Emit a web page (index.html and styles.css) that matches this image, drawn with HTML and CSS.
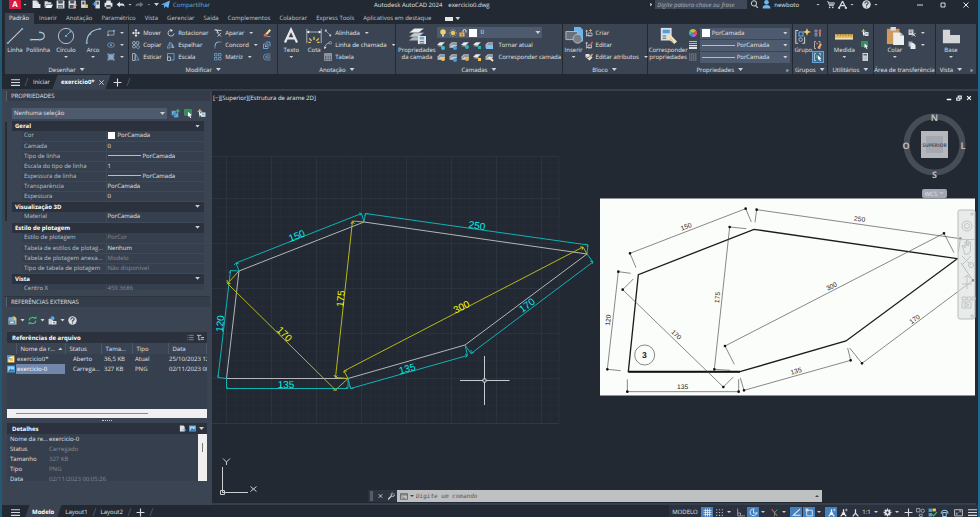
FILE: index.html
```html
<!DOCTYPE html>
<html lang="pt-BR">
<head>
<meta charset="utf-8">
<title>Autodesk AutoCAD 2024 - exercicio0.dwg</title>
<link rel="stylesheet" href="styles.css">
</head>
<body>
<svg class="sprite" aria-hidden="true">
  <symbol id="new" viewBox="0 0 16 16"><path d="M1 1h8l3 3v3H15v7H1z" fill="#e4e6e9"/><path d="M9 1v3h3" fill="none" stroke="#59616d"/></symbol>
  <symbol id="open" viewBox="0 0 16 16"><path d="M1 2h5l2 2h5v3H5l-3 6H1z" fill="#d4d7db"/><path d="M5 8h11l-3 6H2z" fill="#f2f3f4"/></symbol>
  <symbol id="save" viewBox="0 0 16 16"><path d="M1 1h13l1 1v13H1z" fill="#d9dce0"/><path d="M4 1h8v5H4zM4 9h8v5H4z" fill="#4a5260"/><path d="M5 11h6M5 13h6" stroke="#e4e6e9"/></symbol>
  <symbol id="saveas" viewBox="0 0 16 16"><path d="M1 1h13v14H1z" fill="#d9dce0"/><path d="M4 1h7v5H4zM3 9h7v5H3z" fill="#4a5260"/><path d="M8 14l6-7 2 2-6 6z" fill="#e8875a"/></symbol>
  <symbol id="webopen" viewBox="0 0 16 16"><path d="M2 1h8v13H2z" fill="#d9dce0"/><path d="M4 3h4v5H4z" fill="#4a5260"/><path d="M9 8h5v6H7z" fill="#efc15c"/></symbol>
  <symbol id="websave" viewBox="0 0 16 16"><path d="M6 1h8v14H6z" fill="#d9dce0"/><path d="M8 3h4v5H8z" fill="#4a5260"/><path d="M1 7h6M4 4l3 3-3 3" stroke="#5eb1e8" stroke-width="2" fill="none"/></symbol>
  <symbol id="print" viewBox="0 0 16 16"><path d="M4 1h8v4H4zM1 5h14v7h-3v3H4v-3H1z" fill="#e4e6e9"/><path d="M4 9h8v4H4z" fill="#454d5a"/></symbol>
  <symbol id="undo" viewBox="0 0 16 16"><path d="M1 8l6-5v3h4q4 0 4 6-2-3-8-2v3z" fill="#dfe2e5"/></symbol>
  <symbol id="redo" viewBox="0 0 16 16"><path d="M15 8L9 3v3H5q-4 0-4 6 2-3 8-2v3z" fill="#69717d"/></symbol>
  <symbol id="plane" viewBox="0 0 16 16"><path d="M0 8L16 1l-3 13-5-3-2 4-1-6 7-5-8 5z" fill="#67b5ec"/></symbol>
  <symbol id="lens" viewBox="0 0 16 16"><circle cx="7" cy="6" r="4.500" fill="none" stroke="#c5c9ce" stroke-width="1.800"/><path d="M10 10l4 4" stroke="#c5c9ce" stroke-width="2.200"/></symbol>
  <symbol id="user" viewBox="0 0 16 16"><circle cx="8" cy="4" r="4" fill="#6bb9ef"/><path d="M1 15q0-6 7-6t7 6z" fill="#6bb9ef"/></symbol>
  <symbol id="cart" viewBox="0 0 16 16"><path d="M2 3h2l2 7h7l2-5H5" fill="none" stroke="#cfd3d8" stroke-width="1.600"/><path d="M5 6h9l-1 3H6z" fill="#aeb3ba"/><circle cx="6.500" cy="13" r="1.500" fill="#cfd3d8"/><circle cx="12" cy="13" r="1.500" fill="#cfd3d8"/></symbol>
  <symbol id="delta" viewBox="0 0 16 16"><path d="M8 2L2 14M8 2l6 12M4 10h8" fill="none" stroke="#dadde1" stroke-width="2"/><circle cx="2" cy="14" r="2" fill="#dadde1"/><circle cx="14" cy="14" r="2" fill="#dadde1"/></symbol>
  <symbol id="help" viewBox="0 0 16 16"><circle cx="8" cy="8" r="7.5" fill="#d8dadd"/><path d="M5 6q0-3 3-3t3 2.500q0 1.500-3 3.500v1M8 11.500v2" fill="none" stroke="#3b4453" stroke-width="2"/></symbol>

  <symbol id="line" viewBox="0 0 20 20"><path d="M2 18L18 2" stroke="#c5c9cf" stroke-width="1.200"/><path d="M1 17h2v2H1zM17 1h2v2h-2z" fill="#62b4ee"/></symbol>
  <symbol id="pline" viewBox="0 0 20 20"><path d="M2 14h10q5 0 5-4t-5-4" fill="none" stroke="#c5c9cf" stroke-width="1.200"/><path d="M1 13h2v2H1zM11 13h2v2h-2zM11 5h2v2h-2z" fill="#62b4ee"/></symbol>
  <symbol id="circle" viewBox="0 0 20 20"><circle cx="10" cy="10" r="8.500" fill="none" stroke="#c5c9cf"/><path d="M10 10l5-5" stroke="#62b4ee"/><path d="M9 9h2v2H9zM14 4h2v2h-2z" fill="#62b4ee"/></symbol>
  <symbol id="arc" viewBox="0 0 20 20"><path d="M3 18Q3 4 18 2" fill="none" stroke="#c5c9cf" stroke-width="1.200"/><path d="M2 17h2v2H2zM6 7h2v2H6zM17 1h2v2h-2z" fill="#62b4ee"/></symbol>
  <symbol id="rect" viewBox="0 0 16 16"><path d="M2 4h12v8H2z" fill="none" stroke="#aeb3bb" stroke-width="1.500"/><path d="M0 11h4v3H0zM12 2h4v3h-4z" fill="#62b4ee"/></symbol>
  <symbol id="ellipse" viewBox="0 0 16 16"><ellipse cx="8" cy="8" rx="7" ry="4.500" fill="none" stroke="#7f9fbd" stroke-width="1.500"/><circle cx="8" cy="8" r="1.800" fill="#62b4ee"/></symbol>
  <symbol id="hatch" viewBox="0 0 16 16"><path d="M3 3h10v10H3z" fill="#7fa9d0"/><path d="M2.500 0v16M13.500 0v16M0 2.500h16M0 13.500h16" stroke="#a9b5c3"/></symbol>
  <symbol id="move" viewBox="0 0 16 16"><path d="M8 1v14M1 8h14" stroke="#e0e3e6" stroke-width="2"/><path d="M5 4l3-4 3 4zM5 12l3 4 3-4zM4 5L0 8l4 3zM12 5l4 3-4 3z" fill="#e0e3e6"/></symbol>
  <symbol id="copy" viewBox="0 0 16 16"><g fill="none" stroke="#bfc4cb" stroke-width="1.500"><circle cx="4" cy="4" r="3"/><circle cx="11" cy="4" r="3"/><circle cx="4" cy="11" r="3"/></g><circle cx="12" cy="12" r="3" fill="none" stroke="#62b4ee" stroke-width="1.500"/></symbol>
  <symbol id="stretch" viewBox="0 0 16 16"><path d="M1 1h5v14H1z" fill="none" stroke="#bfc4cb" stroke-width="1.500"/><path d="M7 2l7 12H7z" fill="none" stroke="#62b4ee" stroke-width="1.500"/></symbol>
  <symbol id="rotate" viewBox="0 0 16 16"><path d="M10 2.500A6 6 0 1 0 14 9" fill="none" stroke="#c9cdd3" stroke-width="1.800"/><path d="M7 0l5 3-5 3z" fill="#e0e3e6"/></symbol>
  <symbol id="mirror" viewBox="0 0 16 16"><path d="M6 2v12H0z" fill="none" stroke="#62b4ee" stroke-width="1.500"/><path d="M9 2v12h6z" fill="#8fa3b8"/></symbol>
  <symbol id="scale" viewBox="0 0 16 16"><path d="M1 1h13v13H1z" fill="none" stroke="#62b4ee" stroke-width="1.500"/><path d="M1 8h6v7H1z" fill="#3b4453" stroke="#c9cdd3" stroke-width="1.500"/></symbol>
  <symbol id="trim" viewBox="0 0 16 16"><path d="M1 2l14 1M3 0l6 8M8 2L6 8" stroke="#d5d8dc" stroke-width="1.800"/><path d="M7 8l7 7M14 8l-7 7" stroke="#c9cdd3" stroke-width="1.800"/></symbol>
  <symbol id="fillet" viewBox="0 0 16 16"><path d="M2 15V9q0-7 7-7h6" fill="none" stroke="#8b98a8" stroke-width="1.500"/><path d="M2 10q0-8 7-8" fill="none" stroke="#62b4ee" stroke-width="2"/></symbol>
  <symbol id="array" viewBox="0 0 16 16"><path d="M1 1h5v5H1zM9 1h5v5H9zM1 9h5v5H1zM9 9h5v5H9z" fill="none" stroke="#6ea9d8" stroke-width="1.500"/></symbol>
  <symbol id="erase" viewBox="0 0 16 16"><path d="M5 9L13 0l3 3-8 9z" fill="#f0d99a"/><path d="M1 12l4-4 4 4-3 3H2z" fill="#e9655c"/><path d="M7 15h8" stroke="#d8dadd"/></symbol>
  <symbol id="explode" viewBox="0 0 16 16"><path d="M1 6h9v9H1zM5 2h9v9" fill="none" stroke="#6ea9d8" stroke-width="1.800"/><path d="M4 9h3v3H4z" fill="#c9cdd3"/></symbol>
  <symbol id="offset" viewBox="0 0 16 16"><path d="M15 2H7q-6 0-6 6t6 6h8" fill="none" stroke="#5b93c4" stroke-width="1.800"/><path d="M15 6H8q-3 0-3 2t3 2h7" fill="none" stroke="#9aa3af" stroke-width="1.500"/></symbol>

  <symbol id="text" viewBox="0 0 20 20"><path d="M2.500 18L10 2l7.500 16M5 13h10" fill="none" stroke="#e6e8ea" stroke-width="2.800"/></symbol>
  <symbol id="dim" viewBox="0 0 20 20"><path d="M1 1v18M19 1v18M1 5h18" stroke="#c9cdd3" fill="none"/><path d="M1 5l3-2v4zM19 5l-3-2v4z" fill="#fff"/><path d="M10 15v-4M7 16l-3-3M13 16l3-3M6 18H3M14 18h3" stroke="#efc65f" stroke-width="1.600"/></symbol>
  <symbol id="aligned" viewBox="0 0 16 16"><path d="M1 4l4-3M11 15l4-3M3 3l10 10" stroke="#62b4ee" stroke-width="1.500"/><path d="M2 1l4 2-3 3zM14 15l-4-2 3-3z" fill="#dfe2e5"/></symbol>
  <symbol id="leader" viewBox="0 0 16 16"><path d="M1 15Q3 5 10 4" fill="none" stroke="#c9cdd3" stroke-width="1.500"/><circle cx="12.500" cy="3.500" r="2.500" fill="none" stroke="#c9cdd3" stroke-width="1.200"/><path d="M0 11l1 5 4-3z" fill="#dfe2e5"/></symbol>
  <symbol id="table" viewBox="0 0 16 16"><path d="M1 1h14v14H1zM1 5h14M1 8h14M1 11.500h14M6 5v10M10.500 5v10" fill="none" stroke="#b9bfc7" stroke-width="1.200"/><path d="M1 1h14v3H1z" fill="#8b94a1"/></symbol>

  <symbol id="layers" viewBox="0 0 20 20"><path d="M1 15l6-5h11l-6 5z" fill="#aeb2b8"/><path d="M1 11l6-5h11l-6 5z" fill="#c9ccd0" stroke="#454d5a" stroke-width=".5"/><path d="M1 6.500l6-5h11l-6 5z" fill="#eceded" stroke="#454d5a" stroke-width=".5"/><path d="M11 10h9v9h-9z" fill="#e3e6e9"/><path d="M13 11h5v3h-5z" fill="#60aee6"/><path d="M13 16h5M13 18h5" stroke="#59616d"/></symbol>
  <symbol id="bulb" viewBox="0 0 16 16"><circle cx="8" cy="6" r="5.500" fill="#f7cf68"/><path d="M6 11h4v4H6z" fill="#d9d2ba"/></symbol>
  <symbol id="sun" viewBox="0 0 16 16"><circle cx="8" cy="8" r="4" fill="#f7cf68"/><path d="M8 0v16M0 8h16M2.500 2.500l11 11M13.500 2.500l-11 11" stroke="#f0bf55" stroke-width="1.200"/></symbol>
  <symbol id="lock" viewBox="0 0 16 16"><path d="M1 7h10v8H1z" fill="#f2b24f"/><path d="M8 7V4q0-3 3-3t3 3v3" fill="none" stroke="#e4e6e9" stroke-width="2"/><path d="M5 9h2v4H5z" fill="#564427"/></symbol>
  <symbol id="lyr" viewBox="0 0 16 16"><path d="M0 7l5-5h9l-5 5z" fill="#e6e8ea"/><path d="M0 9l5-2h5l-2 3z" fill="#abb1b8"/></symbol>
  <symbol id="lyr2" viewBox="0 0 16 16"><path d="M1 6l4-4h9v6l-4 4H1z" fill="#c9cdd2"/><path d="M2 10l4-4h8M2 8l4-4h8" stroke="#545d69" fill="none"/></symbol>
  <symbol id="match" viewBox="0 0 20 20"><path d="M2 1h12v14H2z" fill="#dcdfe2"/><path d="M4 3h8v4H4z" fill="#4f9fdb"/><path d="M4 10h4M4 12.500h4" stroke="#515a66"/><path d="M9 12l4-3 7 7-3 3z" fill="#efe3c0"/><path d="M12 12l4 5" stroke="#e8a84a"/></symbol>

  <symbol id="insert" viewBox="0 0 20 20"><path d="M10 0h7l3 3v13H10z" fill="#69b7ee"/><path d="M1 5h13v9H1z" fill="#69717c" stroke="#b9bec5"/><circle cx="14" cy="13" r="5" fill="#78808a" stroke="#b9bec5"/></symbol>
  <symbol id="bcreate" viewBox="0 0 16 16"><path d="M1 4h5M3 2v13M3 13h9M6 8h8v6H6z" fill="none" stroke="#c9cdd3" stroke-width="1.500"/><path d="M11 0v6M8 3h6" stroke="#eda553" stroke-width="1.800"/></symbol>
  <symbol id="bedit" viewBox="0 0 16 16"><path d="M1 4h5M3 2v13M3 13h9M6 8h7v6H6z" fill="none" stroke="#c9cdd3" stroke-width="1.500"/><path d="M8 10l6-9 2 2-6 8z" fill="#e9655c"/></symbol>
  <symbol id="battr" viewBox="0 0 16 16"><path d="M1 2h7l7 7-6 6-8-7z" fill="#dfe2e5"/><path d="M3 7l3 3 6-7" stroke="#454d5a" stroke-width="1.500" fill="none"/><path d="M8 9l6-8 2 2-6 7z" fill="#efb158"/></symbol>

  <symbol id="wheel" viewBox="0 0 16 16"><path d="M8 8V0a8 8 0 0 1 7 4z" fill="#f59f34"/><path d="M8 8l7-4a8 8 0 0 1 0 8z" fill="#e84d52"/><path d="M8 8l7 4a8 8 0 0 1-7 4z" fill="#c95fc3"/><path d="M8 8v8a8 8 0 0 1-7-4z" fill="#4d79e3"/><path d="M8 8l-7 4a8 8 0 0 1 0-8z" fill="#3bbf9a"/><path d="M8 8L1 4a8 8 0 0 1 7-4z" fill="#a5cf4b"/></symbol>
  <symbol id="lweight" viewBox="0 0 16 16"><path d="M0 1h16M0 5h16" stroke="#dfe2e5" stroke-width="1.500"/><path d="M0 8h16v2.500H0zM0 12h16v4H0z" fill="#dfe2e5"/></symbol>
  <symbol id="ltype" viewBox="0 0 16 16"><path d="M0 2h16M0 6h16M0 10h16M0 14h16" stroke="#8f98a5" stroke-width="1.800" stroke-dasharray="3 1"/></symbol>

  <symbol id="group" viewBox="0 0 20 20"><path d="M4 3H1v16h3M9 19h3V11" fill="none" stroke="#c9cdd3" stroke-width="1.300"/><path d="M5 5h5v5H5z" fill="none" stroke="#62b4ee" stroke-width="1.300"/><circle cx="7" cy="14.500" r="2.200" fill="none" stroke="#b9bec5" stroke-width="1.200"/><path d="M15 0l1.200 3.500L20 5l-3.800 1.300L15 10l-1.300-3.700L10 5l3.700-1.500z" fill="#f7cc60"/></symbol>
  <symbol id="ungroup" viewBox="0 0 16 16"><path d="M2 2h4v4H2zM2 9h4v5H2z" fill="none" stroke="#8fb6d8" stroke-width="1.500"/><path d="M12 1v14" stroke="#c9cdd3" stroke-width="2"/><path d="M9 3l5 5M14 3L9 8" stroke="#e35a54" stroke-width="1.800"/></symbol>
  <symbol id="gedit" viewBox="0 0 16 16"><path d="M4 1H1v14h3M9 1h3v14H9" fill="none" stroke="#c9cdd3" stroke-width="1.500"/><circle cx="6" cy="5" r="2" fill="#e35a54"/><path d="M7 13l6-8 3 2-6 8z" fill="#efb158"/></symbol>
  <symbol id="gsel" viewBox="0 0 16 16"><path d="M4 1H1v14h3M10 1h3v4" fill="none" stroke="#d9dce0" stroke-width="1.500"/><path d="M4 4h5v6H4z" fill="#3fae6c"/><path d="M8 5l7 6-3 .500 2 4-2 .500-2-4-2 2z" fill="#fff"/></symbol>
  <symbol id="ruler" viewBox="0 0 20 20"><path d="M0 8h20v5H0z" fill="#e2b65c"/><path d="M0 12h20v2H0z" fill="#f2dfae"/><path d="M3 8v2M6 8v2M9 8v2M12 8v2M15 8v2M18 8v2" stroke="#9c793b"/></symbol>
  <symbol id="qsel" viewBox="0 0 16 16"><path d="M7 6h8v8H7z" fill="#d9dce0"/><path d="M5 0v8M1 4h8" stroke="#f0c060" stroke-width="2"/><path d="M3 4l6 7-3 0-1 4z" fill="#fff"/><path d="M9 8h4v3H9z" fill="#62b4ee"/></symbol>
  <symbol id="selall" viewBox="0 0 16 16"><path d="M1 1h12v10H1z" fill="#2f8d5a" stroke="#5fa981"/><path d="M7 5l7 6-3 .500 2 4-2 .500-2-4-2 2z" fill="#fff"/></symbol>
  <symbol id="calc" viewBox="0 0 16 16"><path d="M3 0h11v16H3z" fill="#d4d7db"/><path d="M5 2h7v3H5z" fill="#555e6a"/><path d="M5 8h7M5 11h7M5 14h7" stroke="#868e99" stroke-dasharray="2 .5"/></symbol>
  <symbol id="paste" viewBox="0 0 20 20"><path d="M1 2h14v17H1z" fill="#cf9a5c"/><path d="M5 0h6v4H5z" fill="#d9dce0"/><path d="M8 6h8l4 4v10H8z" fill="#eceded"/><path d="M16 6v4h4" fill="#b2b6bb"/></symbol>
  <symbol id="cut" viewBox="0 0 16 16"><path d="M1 1h10v11H1z" fill="#c9cdd3"/><path d="M3 4h6M3 7h5" stroke="#454d5a"/><path d="M8 8l7 7M15 8l-7 7" stroke="#e6e8ea" stroke-width="1.800"/></symbol>
  <symbol id="dup" viewBox="0 0 16 16"><path d="M1 1h8v10H1z" fill="#aab0b8"/><path d="M5 4h6l4 4v8H5z" fill="#e6e8ea"/></symbol>
  <symbol id="base" viewBox="0 0 20 20"><path d="M1 3h8v6h11v9H1z" fill="#d4d5d7"/></symbol>

  <symbol id="pick" viewBox="0 0 16 16"><path d="M1 3h8v8H1zM5 7h8v8H5z" fill="#6cb2e6" stroke="#2f5d86"/><path d="M12 0v7M8.500 3.500h7" stroke="#44c07c" stroke-width="2"/></symbol>
  <symbol id="xref" viewBox="0 0 16 16"><path d="M1 5h7V1h4l3 3v11H1z" fill="#e9c46a"/><path d="M1 2h9v6H1z" fill="#6fb0df"/><path d="M1 8h12v7H1z" fill="#4c95d0"/><path d="M4 10h6v3H4z" fill="#e4e6e9"/></symbol>
  <symbol id="refresh" viewBox="0 0 16 16"><path d="M2 8a6 5.500 0 0 1 10-4M14 8a6 5.500 0 0 1-10 4" fill="none" stroke="#3fc07a" stroke-width="2"/><path d="M10 5h5V0zM6 11H1v5z" fill="#3fc07a"/></symbol>
  <symbol id="path" viewBox="0 0 16 16"><path d="M1 5h8v10H1z" fill="#cfd3d8"/><path d="M7 9h8v6H7z" fill="#e6e8ea"/><circle cx="8" cy="4" r="3.500" fill="#5ca7df"/><path d="M9 12h4" stroke="#454d5a" stroke-width="1.500"/></symbol>
  <symbol id="dwg" viewBox="0 0 16 16"><path d="M1 1h14v14H1z" fill="#eac35e"/><path d="M0 0h7v9H0z" fill="#4a90cc"/><path d="M4 5h9v8H4z" fill="none" stroke="#fff" stroke-width="1.500"/></symbol>
  <symbol id="png" viewBox="0 0 16 16"><path d="M0 1h16v14H0z" fill="#4297db"/><path d="M2 3h12v10H2z" fill="#9fd3f5"/><path d="M2 13l5-6 3 3 2-2 2 3v2z" fill="#2f73ad"/></symbol>
  <symbol id="list" viewBox="0 0 16 16"><path d="M1 3h2M5 3h10M1 8h2M5 8h10M1 13h2M5 13h10" stroke="#a5acb6" stroke-width="1.500"/></symbol>
  <symbol id="tree" viewBox="0 0 16 16"><path d="M0 3h10M4 3v10h4M9 8h7M9 12h7" fill="none" stroke="#c9cdd3" stroke-width="2"/></symbol>
  <symbol id="doc" viewBox="0 0 16 16"><path d="M2 1h8l3 3v11H2z" fill="#dfe2e5"/><path d="M8 11h7M12 8l3 3-3 3" stroke="#65a9da" stroke-width="2" fill="none"/></symbol>
  <symbol id="menu" viewBox="0 0 16 16"><path d="M0 3h16M0 8h16M0 13h16" stroke="#d5d8dc" stroke-width="2"/></symbol>
  <symbol id="plus" viewBox="0 0 16 16"><path d="M8 1v14M1 8h14" stroke="#dadde1" stroke-width="2"/></symbol>

  <symbol id="sgrid" viewBox="0 0 16 16"><path d="M4.500 1v14M8 1v14M11.500 1v14M1 4.500h14M1 8h14M1 11.500h14" stroke="#e8f1fa" stroke-width="1.300"/></symbol>
  <symbol id="sdots" viewBox="0 0 16 16"><path d="M2 3h12M2 8h12M2 13h12" stroke="#b8bec6" stroke-width="2" stroke-dasharray="2 3"/></symbol>
  <symbol id="sortho" viewBox="0 0 16 16"><path d="M3 1v13h13M3 9h5v5" fill="none" stroke="#a9b0b9" stroke-width="1.500"/></symbol>
  <symbol id="spolar" viewBox="0 0 16 16"><path d="M14 8a6 6 0 1 1-4-6M8 9V3M8 9h7" fill="none" stroke="#e8f1fa" stroke-width="1.500"/></symbol>
  <symbol id="siso" viewBox="0 0 16 16"><path d="M3 2l10 12" stroke="#d15a5c" stroke-width="1.800"/><path d="M8 8v7M8 8l5-5" stroke="#60aa80" stroke-width="1.500"/></symbol>
  <symbol id="strack" viewBox="0 0 16 16"><path d="M14 2L2 13h13" fill="none" stroke="#e8f1fa" stroke-width="1.800"/></symbol>
  <symbol id="ssnap" viewBox="0 0 16 16"><path d="M3 4h10v10H3z" fill="none" stroke="#e8f1fa" stroke-width="1.500"/><path d="M1 1h5v5H1z" fill="#c8e1f7"/></symbol>
  <symbol id="sann" viewBox="0 0 16 16"><path d="M8 2v7L3 15M8 9l5 6M5 9h6" fill="none" stroke="#eef1f4" stroke-width="2.200"/><path d="M13 1v5M10.500 3.500h5" stroke="#eef1f4"/></symbol>
  <symbol id="sann2" viewBox="0 0 16 16"><path d="M8 2v7L3 15M8 9l5 6" fill="none" stroke="#e1e4e8" stroke-width="2.200"/></symbol>
  <symbol id="gear" viewBox="0 0 16 16"><path d="M8 1v14M1 8h14M3 3l10 10M13 3L3 13" stroke="#dfe2e5" stroke-width="2.500"/><circle cx="8" cy="8" r="3.500" fill="#252c37" stroke="#dfe2e5" stroke-width="3"/></symbol>
  <symbol id="siso2" viewBox="0 0 16 16"><path d="M1 1h6v6H1zM6 11h5v4H6z" fill="none" stroke="#a9b0b9" stroke-width="1.500"/><circle cx="12" cy="5" r="3" fill="none" stroke="#a9b0b9" stroke-width="1.500"/></symbol>
  <symbol id="shw" viewBox="0 0 16 16"><path d="M1 1h6v6H1z" fill="#4f9bd8"/><path d="M8 1h6v5H8z" fill="#efc65f"/><path d="M1 9h6v6H1z" fill="#4f9bd8"/><path d="M7 11l3 3 6-7" fill="none" stroke="#43bc74" stroke-width="2"/></symbol>
  <symbol id="shide" viewBox="0 0 16 16"><path d="M2 10a6 6 0 1 1 12 0M5 8h6v7H5z" fill="none" stroke="#9fc5e4" stroke-width="1.800"/></symbol>
  <symbol id="sclean" viewBox="0 0 16 16"><path d="M1 3h14v11H1z" fill="none" stroke="#d0d4d9" stroke-width="1.500"/><path d="M4 11l3-3M9 8l3-3M4 8v3h3M12 8V5H9" stroke="#d0d4d9" fill="none"/></symbol>
</svg>

<div class="app">
  <header class="titlebar">
    <button class="logo" aria-label="Menu do aplicativo">A</button><i class="c"></i>
    <nav class="quick" aria-label="Acesso rápido">
      <button aria-label="Novo"><svg><use href="#new"/></svg></button>
      <button aria-label="Abrir"><svg><use href="#open"/></svg></button>
      <button aria-label="Salvar"><svg><use href="#save"/></svg></button>
      <button aria-label="Salvar como"><svg><use href="#saveas"/></svg></button>
      <button aria-label="Abrir da web"><svg><use href="#webopen"/></svg></button>
      <button aria-label="Salvar na web"><svg><use href="#websave"/></svg></button>
      <button aria-label="Plotar"><svg><use href="#print"/></svg></button>
      <button aria-label="Desfazer"><svg><use href="#undo"/></svg></button><i class="c"></i>
      <button aria-label="Refazer"><svg><use href="#redo"/></svg></button><i class="c dim"></i>
      <i class="c big"></i>
    </nav>
    <button class="share"><svg><use href="#plane"/></svg>Compartilhar</button>
    <div class="doc-title"><span>Autodesk AutoCAD 2024</span><span>exercicio0.dwg</span></div>
    <div class="account">
      <i class="c right"></i>
      <input class="search" type="text" placeholder="Digite palavra-chave ou frase" aria-label="Digite palavra-chave ou frase">
      <button aria-label="Pesquisar"><svg><use href="#lens"/></svg></button>
      <button class="user"><svg><use href="#user"/></svg>newboto<i class="c"></i></button>
      <button aria-label="Loja"><svg><use href="#cart"/></svg></button>
      <button aria-label="Autodesk App Store"><svg><use href="#delta"/></svg></button><i class="c"></i>
      <button class="help" aria-label="Ajuda"><svg><use href="#help"/></svg></button><i class="c"></i>
    </div>
    <div class="window">
      <button aria-label="Minimizar"><svg viewBox="0 0 8 8"><path d="M1 4h6" stroke="#d5d8dc"/></svg></button>
      <button aria-label="Restaurar"><svg viewBox="0 0 8 8"><path d="M2 2h4v4H2z" fill="none" stroke="#d5d8dc"/></svg></button>
      <button aria-label="Fechar"><svg viewBox="0 0 8 8"><path d="M1.500 1.500l5 5M6.500 1.500l-5 5" stroke="#e6e8ea"/></svg></button>
    </div>
  </header>

  <nav class="tabs">
    <a class="on" href="#">Padrão</a><a href="#">Inserir</a><a href="#">Anotação</a><a href="#">Paramétrico</a><a href="#">Vista</a><a href="#">Gerenciar</a><a href="#">Saída</a><a href="#">Complementos</a><a href="#">Colaborar</a><a href="#">Express Tools</a><a href="#">Aplicativos em destaque</a>
    <button class="mini" aria-label="Minimizar faixa"><b></b><i class="c"></i></button>
  </nav>

  <section class="ribbon">
    <div class="panel">
      <div class="tools draw">
        <button class="lg"><svg><use href="#line"/></svg>Linha</button>
        <button class="lg"><svg><use href="#pline"/></svg>Polilinha</button>
        <button class="lg"><svg><use href="#circle"/></svg>Círculo<i class="c"></i></button>
        <button class="lg"><svg><use href="#arc"/></svg>Arco<i class="c"></i></button>
        <div class="stack">
          <button aria-label="Retângulo"><svg><use href="#rect"/></svg><i class="c"></i></button>
          <button aria-label="Elipse"><svg><use href="#ellipse"/></svg><i class="c"></i></button>
          <button aria-label="Hachura"><svg><use href="#hatch"/></svg><i class="c"></i></button>
        </div>
      </div>
      <button class="cap">Desenhar<i class="c"></i></button>
    </div>
    <div class="panel">
      <div class="tools modify">
        <div class="stack"><button><svg><use href="#move"/></svg>Mover</button><button><svg><use href="#copy"/></svg>Copiar</button><button><svg><use href="#stretch"/></svg>Esticar</button></div>
        <div class="stack"><button><svg><use href="#rotate"/></svg>Rotacionar</button><button><svg><use href="#mirror"/></svg>Espelhar</button><button><svg><use href="#scale"/></svg>Escala</button></div>
        <div class="stack gapc"><button><svg><use href="#trim"/></svg>Aparar<i class="c"></i></button><button><svg><use href="#fillet"/></svg>Concord<i class="c"></i></button><button><svg><use href="#array"/></svg>Matriz<i class="c"></i></button></div>
        <div class="stack"><button aria-label="Apagar"><svg><use href="#erase"/></svg></button><button aria-label="Explodir"><svg><use href="#explode"/></svg></button><button aria-label="Deslocamento"><svg><use href="#offset"/></svg></button></div>
      </div>
      <button class="cap">Modificar<i class="c"></i></button>
    </div>
    <div class="panel">
      <div class="tools note">
        <button class="lg"><svg><use href="#text"/></svg>Texto<i class="c"></i></button>
        <button class="lg"><svg><use href="#dim"/></svg>Cota</button>
        <div class="stack gapc"><button><svg><use href="#aligned"/></svg>Alinhada<i class="c"></i></button><button><svg><use href="#leader"/></svg>Linha de chamada<i class="c"></i></button><button><svg><use href="#table"/></svg>Tabela</button></div>
      </div>
      <button class="cap">Anotação<i class="c"></i></button>
    </div>
    <div class="panel">
      <div class="tools layer">
        <button class="lg"><svg><use href="#layers"/></svg>Propriedades<br>da camada</button>
        <div class="stack">
          <div class="drop layerdrop"><svg><use href="#bulb"/></svg><svg><use href="#sun"/></svg><svg><use href="#lock"/></svg><b class="sw"></b><select aria-label="Camada"><option>0</option></select><i class="c"></i></div>
          <div class="icons">
            <button aria-label="Desligar"><svg viewBox="0 0 9 9"><use href="#lyr" width="9" height="9"/><circle cx="6" cy="7" r="2" fill="#38c3cf"/></svg></button>
            <button aria-label="Isolar"><svg viewBox="0 0 9 9"><use href="#lyr2" width="9" height="9"/><circle cx="6" cy="7" r="2" fill="#4c9bdc"/></svg></button>
            <button aria-label="Congelar"><svg viewBox="0 0 9 9"><use href="#lyr" width="9" height="9"/><circle cx="6" cy="6" r="2" fill="#2fb0b8"/></svg></button>
            <button aria-label="Bloquear"><svg viewBox="0 0 9 9"><use href="#lyr" width="9" height="9"/><path d="M5 5h3v3H5z" fill="#2fb0a4"/></svg></button>
            <button class="lab"><svg viewBox="0 0 9 9"><use href="#lyr2" width="9" height="9"/><path d="M1 4h7v4H1z" fill="#7fc0ee"/></svg>Tornar atual</button>
          </div>
          <div class="icons">
            <button aria-label="Ligar"><svg viewBox="0 0 9 9"><use href="#lyr2" width="9" height="9"/><circle cx="6" cy="6" r="2" fill="#f4c658"/></svg></button>
            <button aria-label="Desfazer isolar"><svg viewBox="0 0 9 9"><use href="#lyr2" width="9" height="9"/><circle cx="6" cy="7" r="2" fill="#4c9bdc"/></svg></button>
            <button aria-label="Descongelar"><svg viewBox="0 0 9 9"><use href="#lyr2" width="9" height="9"/><circle cx="6" cy="6" r="2" fill="#e7b04d"/></svg></button>
            <button aria-label="Desbloquear"><svg viewBox="0 0 9 9"><use href="#lyr" width="9" height="9"/><path d="M5 5h3v3H5z" fill="#f4c658"/></svg></button>
            <button class="lab"><svg viewBox="0 0 9 9"><use href="#lyr2" width="9" height="9"/><path d="M4 4l4 4" stroke="#efe3c0" stroke-width="2"/></svg>Corresponder camada</button>
          </div>
        </div>
      </div>
      <button class="cap">Camadas<i class="c"></i></button>
    </div>
    <div class="panel">
      <div class="tools block">
        <button class="lg"><svg><use href="#insert"/></svg>Inserir<i class="c"></i></button>
        <div class="stack gapc"><button><svg><use href="#bcreate"/></svg>Criar</button><button><svg><use href="#bedit"/></svg>Editar</button><button><svg><use href="#battr"/></svg>Editar atributos<i class="c"></i></button></div>
      </div>
      <button class="cap">Bloco<i class="c"></i></button>
    </div>
    <div class="panel">
      <div class="tools props">
        <button class="lg"><svg><use href="#match"/></svg>Corresponder<br>propriedades</button>
        <div class="stack">
          <div class="pair"><svg><use href="#wheel"/></svg><div class="drop"><b class="sw"></b><select aria-label="Cor"><option>PorCamada</option></select><i class="c"></i></div></div>
          <div class="pair"><svg><use href="#lweight"/></svg><div class="drop"><b class="ln"></b><select aria-label="Espessura de linha"><option>PorCamada</option></select><i class="c"></i></div></div>
          <div class="pair"><svg><use href="#ltype"/></svg><div class="drop"><b class="ln"></b><select aria-label="Tipo de linha"><option>PorCamada</option></select><i class="c"></i></div></div>
        </div>
      </div>
      <button class="cap">Propriedades<i class="c"></i><em>»</em></button>
    </div>
    <div class="panel">
      <div class="tools grp">
        <button class="lg"><svg><use href="#group"/></svg>Grupo</button>
        <div class="stack"><button aria-label="Desagrupar"><svg><use href="#ungroup"/></svg></button><button aria-label="Editar grupo"><svg><use href="#gedit"/></svg></button><button class="sel" aria-label="Seleção de grupo"><svg><use href="#gsel"/></svg></button></div>
      </div>
      <button class="cap">Grupos<i class="c"></i></button>
    </div>
    <div class="panel">
      <div class="tools util">
        <button class="lg"><svg><use href="#ruler"/></svg>Medida<i class="c"></i></button>
        <div class="stack"><button aria-label="Seleção rápida"><svg><use href="#qsel"/></svg></button><button aria-label="Selecionar tudo"><svg><use href="#selall"/></svg></button><button aria-label="Calculadora"><svg><use href="#calc"/></svg></button></div>
      </div>
      <button class="cap">Utilitários<i class="c"></i></button>
    </div>
    <div class="panel">
      <div class="tools clip">
        <button class="lg"><svg><use href="#paste"/></svg>Colar<i class="c"></i></button>
        <div class="stack"><button aria-label="Recortar"><svg><use href="#cut"/></svg><i class="c"></i></button><button aria-label="Copiar recorte"><svg><use href="#dup"/></svg><i class="c"></i></button></div>
      </div>
      <button class="cap">Área de transferência</button>
    </div>
    <div class="panel">
      <div class="tools view"><button class="lg"><svg><use href="#base"/></svg>Base<i class="c"></i></button></div>
      <button class="cap last">Vista<i class="c"></i><em>»</em></button>
    </div>
  </section>

  <nav class="files">
    <button aria-label="Menu de arquivos"><svg><use href="#menu"/></svg></button><s></s>
    <a href="#">Iniciar</a>
    <a class="on" href="#"><span>exercicio0*</span><svg viewBox="0 0 8 8"><path d="M1.500 1.500l5 5M6.500 1.500l-5 5" stroke="#d5d8dc"/></svg></a>
    <button aria-label="Novo desenho"><svg><use href="#plus"/></svg></button><s></s>
  </nav>

  <main>
    <aside>
      <h2>PROPRIEDADES</h2>
      <section class="props-body">
        <div class="selrow">
          <div class="drop"><select aria-label="Seleção"><option>Nenhuma seleção</option></select><i class="c"></i></div>
          <button aria-label="Alternar PICKADD"><svg><use href="#pick"/></svg></button>
          <button aria-label="Selecionar objetos"><svg><use href="#selall"/></svg></button>
          <button aria-label="Seleção rápida"><svg><use href="#qsel"/></svg></button>
        </div>
        <div class="ptable">
          <table>
            <colgroup><col class="k0"><col class="k1"><col></colgroup>
            <tbody><tr class="h"><th colspan="3">Geral<i class="c"></i></th></tr>
            <tr><td></td><td>Cor</td><td><b class="sw"></b>PorCamada</td></tr>
            <tr><td></td><td>Camada</td><td>0</td></tr>
            <tr><td></td><td>Tipo de linha</td><td><b class="ln"></b>PorCamada</td></tr>
            <tr><td></td><td>Escala do tipo de linha</td><td>1</td></tr>
            <tr><td></td><td>Espessura de linha</td><td><b class="ln"></b>PorCamada</td></tr>
            <tr><td></td><td>Transparência</td><td>PorCamada</td></tr>
            <tr><td></td><td>Espessura</td><td>0</td></tr></tbody>
            <tbody><tr class="h"><th colspan="3">Visualização 3D<i class="c"></i></th></tr>
            <tr><td></td><td>Material</td><td>PorCamada</td></tr></tbody>
            <tbody><tr class="h"><th colspan="3">Estilo de plotagem<i class="c"></i></th></tr>
            <tr class="off"><td></td><td>Estilo de plotagem</td><td>PorCor</td></tr>
            <tr><td></td><td>Tabela de estilos de plotag...</td><td>Nenhum</td></tr>
            <tr class="off"><td></td><td>Tabela de plotagem anexa...</td><td>Modelo</td></tr>
            <tr class="off"><td></td><td>Tipo de tabela de plotagem</td><td>Não disponível</td></tr></tbody>
            <tbody><tr class="h"><th colspan="3">Vista<i class="c"></i></th></tr>
            <tr class="off"><td></td><td>Centro X</td><td>459.3686</td></tr></tbody>
          </table>
        </div>
      </section>
      <h2>REFERÊNCIAS EXTERNAS</h2>
      <section class="refs">
        <div class="rtools">
          <button aria-label="Anexar"><svg><use href="#xref"/></svg></button><i class="c"></i>
          <button aria-label="Atualizar"><svg><use href="#refresh"/></svg></button><i class="c"></i>
          <button aria-label="Alterar caminho"><svg><use href="#path"/></svg></button><i class="c"></i>
          <button aria-label="Ajuda"><svg><use href="#help"/></svg></button>
        </div>
        <h3>Referências de arquivo<span><svg><use href="#list"/></svg><svg><use href="#tree"/></svg></span></h3>
        <div class="rlist">
          <table>
            <thead><tr><th></th><th>Nome da r...<i class="c up"></i></th><th>Status</th><th>Tama...</th><th>Tipo</th><th>Data</th></tr></thead>
            <tbody>
              <tr><td><svg><use href="#dwg"/></svg></td><td>exercicio0*</td><td>Aberto</td><td>36,5 KB</td><td>Atual</td><td>25/10/2023 12</td></tr>
              <tr class="on"><td><svg><use href="#png"/></svg></td><td>exercicio-0</td><td>Carrega...</td><td>327 KB</td><td>PNG</td><td>02/11/2023 00</td></tr>
            </tbody>
          </table>
          <div class="hbar"><b></b></div>
        </div>
        <div class="grip"></div>
        <h3>Detalhes<span><svg><use href="#doc"/></svg><svg><use href="#png"/></svg><i class="c"></i></span></h3>
        <div class="details">
          <dl><dt>Nome da re...</dt><dd class="hi">exercicio-0</dd><dt>Status</dt><dd>Carregado</dd><dt>Tamanho</dt><dd>327 KB</dd><dt>Tipo</dt><dd>PNG</dd><dt>Data</dt><dd>02/11/2023 00:05:26</dd></dl>
          <div class="vbar"><b></b></div>
        </div>
      </section>
    </aside>

    <section class="canvas">
      <svg class="model" viewBox="212 91 764 412" preserveAspectRatio="xMinYMin meet" role="img" aria-label="Desenho do exercício 0">
        <defs>
          <pattern id="minor" x="226" y="153" width="9" height="9" patternUnits="userSpaceOnUse"><path d="M.5 0v9M0 .5h9" stroke="#252c37"/></pattern>
          <pattern id="major" x="226" y="153" width="45" height="45" patternUnits="userSpaceOnUse"><path d="M.5 0v45M0 .5h45" stroke="#2b333f"/></pattern>
        </defs>
        <path d="M212 156h347v267H212z" fill="url(#minor)"/>
        <path d="M212 156h347v267H212z" fill="url(#major)"/>
        <path d="M212 156.500h347V423" class="edge"/>
        <path d="M212 423.500h347" class="red"/>
        <g class="white"><path d="M364 222L587 254 465 345 348 378.500H226.500L239 271z"/></g>
        <g class="cyan">
          <path d="M239 271l-3-8L361.500 213.500 364 222l1.500-8.500L588 245l-1 9 6 8L471 353.500 465 345l2.500 10.500-117 33L348 378.500v10H226.500v-10l-8.500-1L230.500 270.500 239 271"/>
          <path d="M234 265l2-2 3 1M359 213l2.500.5-1.500 2M365 216l.5-2.500 3 .5M585 244l3 1-1 2M229 273l1.500-2.500M218 375v2.500M590 261l3 1-1 2M471 350v3.500l3-1M465 354l2.500 1.500-2 2M350 386l.5 2.500 3 0M346 387l2 1.500M226.500 387l2 1.500"/>
        </g>
        <g class="yellow">
          <path d="M239 271l-11.500 12.500L335.500 390 348 378.500l-12.500-1L352.500 221l11.500 1M348 378.500L344 371 583 247l4 7"/>
          <path d="M227 280l.5 3.500h3M333 390h4M351 224l1.500-3 2 3M334 375l1.500 2.500 2-2M344 373v-2l3 0M580 247l3 0-1 3"/>
        </g>
        <g class="num cy">
          <text transform="translate(298 239) rotate(-21)">150</text><text transform="translate(476.500 229) rotate(8)">250</text><text transform="translate(223.500 324) rotate(-84)">120</text><text transform="translate(286 388)">135</text><text transform="translate(408 372) rotate(-15)">135</text><text transform="translate(529 308) rotate(-36)">170</text>
        </g>
        <g class="num ye">
          <text transform="translate(282 336.500) rotate(44)">170</text><text transform="translate(344 299) rotate(-84)">175</text><text transform="translate(463 310) rotate(-27)">300</text>
        </g>
        <path class="cross" d="M460 380.500h23M486 380.500h23.500M484.500 356v23M484.500 382v23M483 379h3v3h-3z"/>
        <path class="ucs" d="M220.500 490.500h4v4h-4zM222.500 492.500V467M222.500 492.500H248M223 458.500l3.500 3.500 3.500-3.500M226.500 462v3M250.500 486.500l6 5M256.500 486.500l-6 5"/>

        <g class="cube">
          <circle cx="934.500" cy="144.500" r="28" />
          <path d="M921 131h27v27h-27z"/>
          <path class="inner" d="M926 136h17v17h-17z"/>
          <text x="934.500" y="147">SUPERIOR</text>
          <g class="dirs"><text x="934.500" y="120.500">N</text><text x="934.500" y="178">S</text><text x="906" y="148.500">O</text><text x="963" y="148.500">L</text></g>
          <rect x="922" y="189" width="25" height="9" rx="2"/>
          <text class="wcs" x="931" y="195.500">WCS</text><path class="wc" d="M940 192l1.500 2 1.500-2"/>
        </g>

        <rect x="600" y="198.500" width="375" height="197" fill="#fbfdfb"/>
        <g transform="translate(590 190) scale(.33333)">
          <g class="scan">
            <path class="thick" d="M115 545L145 254 492 118 1102 206 768 453 450 545z"/>
            <path class="thicker" d="M115 545H450"/>
            <path d="M120 190L467 56M500 59L1111 146M85 245L52 538M98 299L400 591M419 111L373 538M405 468L1062 130M112 605H446M462 601L782 511M816 520L1149 271"/>
            <path d="M120 190l18 43M467 56l17 40M500 59l-5 38M1111 146l-6 40M85 245l37 5M52 538l40 4M98 299l32-32M400 591l30-30M419 111l50 5M373 538l48 3M405 468l28 55M1062 130l30 58M112 568v40M446 568v40M462 601l-11-37M782 511l-9-37M816 520l-37-46M1149 271l-36-52"/>
            <circle cx="164" cy="495" r="30"/>
          </g>
          <g class="dots"><path d="M120 190h0M467 56h0M500 59h0M1111 146h0M85 245h0M52 538h0M98 299h0M400 591h0M419 111h0M373 538h0M405 468h0M1062 130h0M112 605h0M446 605h0M462 601h0M782 511h0M816 520h0M1149 271h0"/></g>
          <g class="snum"><text transform="translate(291 116) rotate(-21)">150</text><text transform="translate(808 94) rotate(8)">250</text><text transform="translate(61 391) rotate(-84)">120</text><text transform="translate(389 323) rotate(-84)">175</text><text transform="translate(254 439) rotate(44)">170</text><text transform="translate(728 295) rotate(-27)">300</text><text transform="translate(978 393) rotate(-36)">170</text><text transform="translate(620 550) rotate(-15)">135</text><text transform="translate(278 597)">135</text><text class="three" transform="translate(163 504)">3</text></g>
        </g>
        <g class="navbar">
          <rect x="958" y="210" width="17" height="109" rx="2"/>
          <path d="M958 239.500h17M971 213h2v2h-2zM971 315h2v2h-2z"/>
          <circle cx="967" cy="226" r="5"/><circle cx="967" cy="226" r="2.500"/>
          <path d="M964 251l-2-5 1-1 2 3v-6l1.500 0 0 4v-6h1.500v6l1-4h1.500v9l-2 3h-4zM962 256l9 9M971 256l-9 9M967 275v14M962 284h10M964 278l3-3 3 3M962 297h4v3h-4zM967 297h4v3h-4zM972 297h3v3h-3zM962 302h9v6h-9zM965 303l4 2-4 2z"/><circle cx="971" cy="265" r="2.500"/>
        </g>
      </svg>
      <span class="vlabel">[−][Superior][Estrutura de arame 2D]</span>
      <div class="vwin"><svg viewBox="0 0 8 8"><path d="M1 6h6" stroke="#fff" stroke-width="2"/></svg><svg viewBox="0 0 8 8"><path d="M1 4h4v3H1zM3 4V1.500h4V5H5" fill="none" stroke="#e6e8ea" stroke-width="1.500"/></svg><svg viewBox="0 0 8 8"><path d="M1.500 1.500l5 5M6.500 1.500l-5 5" stroke="#fff" stroke-width="1.500"/></svg></div>
      <div class="cmd">
        <div class="cmdl"><b></b><svg viewBox="0 0 8 8"><path d="M2 2l4 4M6 2L2 6" stroke="#d5d8dc"/></svg><svg viewBox="0 0 8 8"><path d="M0 8l4-4" stroke="#c9cdd3" stroke-width="1.500"/><path d="M7 1L5.500 2.500M7.500 2.500a2 2 0 1 1-2-2" fill="none" stroke="#c9cdd3"/></svg></div>
        <label class="cmdr"><svg viewBox="0 0 10 8"><path d="M.5.5h9v7h-9zM.5 2h9M2 4l1 1-1 1M4 6h2" fill="none" stroke="#555"/></svg><i class="c"></i><input type="text" placeholder="Digite um comando" aria-label="Digite um comando"><i class="c up"></i></label>
      </div>
    </section>
  </main>

  <footer>
    <nav class="files layouts">
      <button aria-label="Menu de layouts"><svg><use href="#menu"/></svg></button>
      <a class="on" href="#"><span>Modelo</span></a><a href="#">Layout1</a><s></s><a href="#">Layout2</a><s></s>
      <button aria-label="Novo layout"><svg><use href="#plus"/></svg></button><s></s>
    </nav>
    <div class="status">
      <button class="t">MODELO</button>
      <button class="b" aria-label="Grade"><svg><use href="#sgrid"/></svg></button><button aria-label="Snap"><svg><use href="#sdots"/></svg></button><i class="c"></i>
      <button aria-label="Orto"><svg><use href="#sortho"/></svg></button><button class="b" aria-label="Polar"><svg><use href="#spolar"/></svg></button><i class="c"></i>
      <button aria-label="Isométrico"><svg><use href="#siso"/></svg></button><i class="c"></i>
      <button class="b" aria-label="Rastreamento"><svg><use href="#strack"/></svg></button><button class="b" aria-label="Snap ao objeto"><svg><use href="#ssnap"/></svg></button><i class="c"></i>
      <button class="b" aria-label="Visibilidade da anotação"><svg><use href="#sann"/></svg></button><button aria-label="Escala automática"><svg><use href="#sann"/></svg></button><button aria-label="Escala da anotação"><svg><use href="#sann2"/></svg></button><button class="n">1:1</button><i class="c"></i>
      <button aria-label="Espaço de trabalho"><svg><use href="#gear"/></svg></button><i class="c"></i>
      <button aria-label="Monitor"><svg><use href="#plus"/></svg></button><button aria-label="Isolar objetos"><svg><use href="#siso2"/></svg></button><button aria-label="Desempenho"><svg><use href="#shw"/></svg></button><button aria-label="Ocultar"><svg><use href="#shide"/></svg></button><button class="m" aria-label="Tela limpa"><svg><use href="#sclean"/></svg></button><button aria-label="Personalização"><svg><use href="#menu"/></svg></button>
    </div>
  </footer>
</div>
</body>
</html>
```
FILE: styles.css
```css
* { box-sizing: border-box; }
body { margin: 0; background: #222932; color: #e1e4e8; font: 6px/8px "Open Sans", "Noto Sans", sans-serif; text-rendering: geometricPrecision; }
button, input, select { font: inherit; color: inherit; background: none; border: 0; padding: 0; margin: 0; border-radius: 0; appearance: none; outline: 0; text-rendering: inherit; }
button { display: flex; align-items: center; white-space: nowrap; }
a { color: inherit; text-decoration: none; white-space: nowrap; }
svg { width: 8px; height: 8px; flex: none; display: block; }
table { border-collapse: collapse; }
.sprite { position: absolute; width: 0; height: 0; }
.app { min-height: 100vh; display: flex; flex-direction: column; border-left: 2px solid #235a73; border-right: 2px solid #1c6c96; overflow: hidden; }

/* drop-down arrow */
.c { flex: none; width: 5px; height: 3px; background: #cdd1d6; clip-path: polygon(0 0, 100% 0, 50% 100%); }
.c.up { clip-path: polygon(50% 0, 100% 100%, 0 100%); }
.c.right { width: 3px; height: 5px; clip-path: polygon(0 0, 100% 50%, 0 100%); }
.c.dim { opacity: .5; }
.sw { flex: none; width: 8px; height: 8px; background: #fff; }
.ln { flex: none; width: 33px; height: 1px; background: #b8bdc5; }

.titlebar { display: flex; align-items: center; height: 9px; padding-left: 7px; }
.titlebar svg { width: 9px; height: 9px; }
.titlebar .c { width: 4px; height: 2px; }
.titlebar .c.big { width: 5px; height: 3px; }
.titlebar .c.right { width: 2px; height: 4px; }
.logo { width: 12px; height: 9px; justify-content: center; background: #d9193f; color: #fff; font-weight: 700; font-size: 8px; margin-right: 2px; }
.quick { display: flex; align-items: center; gap: 3px; margin-left: 5px; }
.share { gap: 3px; margin-left: 2px; color: #5fb0e6; }
.doc-title { display: flex; gap: 6px; margin-left: 164px; }
.account { display: flex; align-items: center; gap: 3px; margin-left: auto; }
.search { width: 92px; height: 9px; padding: 0 2px; background: #3f4959; font-style: italic; }
.search::placeholder { color: #aeb4bd; opacity: 1; }
.user { gap: 3px; margin-right: 3px; }
.user .c { margin-left: 14px; }
.help { margin-left: 5px; }
.window { display: flex; gap: 15px; margin: 0 8px 0 38px; }
.window svg { width: 8px; height: 8px; }

.tabs { display: flex; align-items: flex-end; height: 15px; padding-left: 3px; color: #c3c8cf; }
.tabs a { height: 11px; line-height: 10px; margin-right: 9px; }
.tabs a.on { padding: 0 5px 0 4px; margin-right: 5px; background: #3b4453; color: #eceef0; }
.mini { height: 11px; gap: 2px; margin-left: 5px; }
.mini b { width: 8px; height: 4px; background: #e6e8ea; }

.ribbon { display: grid; grid-template-columns: 123fr 148fr 117fr 165fr 84fr 144fr 34fr 45fr 61fr 40fr; gap: 1px; padding: 0 2px 0 3px; height: 50px; }
.panel { display: flex; flex-direction: column; background: #3b4453; min-width: 0; }
.tools { display: grid; height: 41px; padding-top: 3px; }
.draw { grid-template-columns: 20px 26px 30px 24px 1fr; }
.modify { grid-template-columns: 35px 47px 49px 1fr; padding-left: 3px; }
.note { grid-template-columns: 26px 20px 1fr; }
.layer { grid-template-columns: 41px 1fr; }
.block { grid-template-columns: 22px 1fr; }
.props { grid-template-columns: 41px 1fr; }
.grp { grid-template-columns: 21px 1fr; }
.util { grid-template-columns: 33px 1fr; }
.clip { grid-template-columns: 22px 1fr; padding-left: 10px; }
.view { grid-template-columns: 1fr; padding-right: 10px; }
.lg { flex-direction: column; justify-self: center; width: 0; height: 34px; line-height: 7px; text-align: center; }
.lg svg { width: 18px; height: 18px; margin-bottom: 2px; }
.lg .c { width: 4px; height: 2px; margin-top: 2px; }
.note .lg svg, .grp .lg svg { width: 16px; }
.stack > * { height: 12px; gap: 3px; }
.stack button .c { width: 4px; height: 2px; margin-left: 2px; }
.stack svg { width: 8px; height: 8px; }
.draw .stack, .clip .stack { padding-left: 2px; }
.cap { height: 9px; justify-content: center; gap: 4px; position: relative; }
.cap em { position: absolute; right: 3px; font-style: normal; }
.cap.last { padding-right: 10px; }
.drop { display: flex; align-items: center; background: #4e5a6d; height: 11px; padding: 0 2px; }
.drop select { flex: 1; min-width: 0; height: 10px; line-height: 9px; }
.layer .drop { width: 105px; height: 11px; gap: 2px; margin-bottom: 1px; }
.layerdrop select { padding-left: 1px; }
.icons { display: flex; }
.icons button { gap: 4px; }
.layer .icons svg { width: 9px; height: 9px; }
.pair { display: flex; align-items: center; }
.pair .drop { flex: 1; gap: 2px; margin-right: 2px; }
.grp .sel { background: #3f6a94; border: 1px solid #62a5dc; width: 12px; padding: 0 1px; margin-left: -2px; }

.files { display: flex; align-items: center; height: 14px; padding-left: 9px; margin-top: 1px; }
.files svg { width: 9px; height: 9px; }
.files s { width: 1px; height: 8px; background: #4b5462; transform: skewX(-20deg); margin: 0 6px; }
.files .on { position: relative; display: flex; align-items: center; gap: 3px; height: 14px; padding: 0 3px 0 6px; margin: 0 5px; color: #fff; font-weight: 700; z-index: 0; }
.files .on::before { content: ""; position: absolute; inset: 0; background: #3b4453; transform: skewX(-20deg); z-index: -1; }
.files .on svg { width: 7px; height: 7px; }

main { flex: 1; display: flex; border-top: 2px solid #363f4d; min-height: 414px; }
aside { width: 210px; flex: none; background: #3b4453; padding-left: 2px; display: flex; flex-direction: column; border-right: 2px solid #3b4453; }
aside h2 { margin: 0 0 0 2px; height: 10px; font: 6px/10px "Open Sans", sans-serif; padding-left: 4px; background: #343c4a; border-left: 1px solid #59616e; }
.props-body { position: relative; padding: 7px 4px 0 8px; height: 196px; border-bottom: 1px solid #2d3541; }
.props-body::before { content: ""; position: absolute; left: 1px; top: 21px; width: 2px; height: 99px; background: #262d38; }
.selrow { display: flex; align-items: center; gap: 4px; margin-bottom: 2px; }
.selrow .drop { width: 155px; height: 11px; }
.selrow svg { width: 9px; height: 9px; }
.ptable { height: 169px; overflow: hidden; }
.ptable table { width: 192px; table-layout: fixed; background: #363f4d; }
.k0 { width: 10px; }
.k1 { width: 84px; }
.ptable tr { height: 10px; }
.ptable td { padding: 0 0 0 1px; line-height: 9px; height: 10px; border-bottom: 1px solid #3f4857; white-space: nowrap; vertical-align: middle; color: #e1e4e8; }
.ptable td:nth-child(2) { padding-left: 2px; color: #bdc2ca; border-right: 1px solid #3f4857; }
.ptable td:first-child { background: #3b4453; border-color: #3b4453; }
.ptable th { text-align: left; line-height: 9px; height: 10px; padding: 0 4px 0 3px; background: #2b323d; color: #fff; }
.ptable tbody + tbody th { height: 11px; line-height: 10px; }
.ptable th .c { float: right; margin-top: 3px; }
.ptable .off td:last-child { color: #848c98; }
.ptable .sw, .ptable .ln { display: inline-block; margin-right: 2px; vertical-align: middle; }
.ptable .sw { width: 7px; height: 7px; margin-right: 3px; }

.refs { padding: 7px 3px 0 3px; }
.rtools { display: flex; align-items: center; gap: 3px; height: 12px; margin-bottom: 6px; padding-left: 1px; }
.rtools svg { width: 9px; height: 9px; }
.refs h3 { display: flex; justify-content: space-between; align-items: center; margin: 0; height: 11px; font-size: 6px; background: #2b323d; color: #fff; padding: 0 3px 0 5px; }
.refs h3 span { display: flex; align-items: center; gap: 3px; }
.refs h3 svg { width: 7px; height: 7px; }
.rlist { overflow: hidden; height: 75px; background: #363f4d; display: flex; flex-direction: column; justify-content: space-between; }
.rlist table { table-layout: fixed; width: 100%; }
.rlist th, .rlist td { padding: 0 0 0 3px; height: 10px; line-height: 10px; white-space: nowrap; text-align: left; font-weight: 400; }
.rlist th { height: 11px; border-right: 1px solid #4d5767; padding-left: 4px; background: #3b4453; }
.rlist th .c { display: inline-block; margin-left: 3px; vertical-align: middle; }
.rlist th:nth-child(1), .rlist td:nth-child(1) { width: 9px; padding: 0; }
.rlist th:nth-child(2) { width: 49px; }
.rlist td:nth-child(2) { padding-left: 1px; }
.rlist th:nth-child(3) { width: 36px; }
.rlist td:nth-child(3) { padding-left: 8px; }
.rlist th:nth-child(4) { width: 31px; }
.rlist th:nth-child(5) { width: 36px; }
.rlist td:nth-child(6) { padding-left: 1px; }
.rlist .on td:nth-child(2) { background: #7287ab; color: #fff; }
.hbar { height: 9px; background: #f0f0f0; padding: 4px 9px; }
.hbar b { display: block; width: 132px; height: 1px; background: #8a8a8a; }
.grip { width: 10px; height: 1px; margin: 2px auto 2px; border-top: 1px dotted #c9cdd3; }
.details { display: flex; height: 47px; overflow: hidden; background: #363f4d; }
.details dl { flex: 1; margin: 0; display: grid; grid-template-columns: 42px 1fr; grid-auto-rows: 10px; line-height: 10px; }
.details dt { padding-left: 3px; }
.details dd { margin: 0; color: #858d99; }
.details dd.hi { color: #e1e4e8; }
.vbar { width: 9px; background: #f0f0f0; padding: 9px 4px; }
.vbar b { display: block; width: 1px; height: 9px; background: #777; }

.canvas { flex: 1; position: relative; min-width: 0; border-bottom: 2px solid #363f4d; margin-right: 2px; }
.model { width: 100%; height: auto; }
.edge { fill: none; stroke: #2b333f; }
.red { stroke: #532a34; }
.white path { fill: none; stroke: #b3b6ba; }
.cyan path { fill: none; stroke: #10b2b4; }
.yellow path { fill: none; stroke: #b5b81a; }
.num text { font: 10px "Liberation Sans", sans-serif; text-anchor: middle; }
.cy text { fill: #00f0f0; }
.ye text { fill: #f4f400; }
.cross, .ucs { fill: none; stroke: #c9ccd0; }
.cube circle { fill: none; stroke: #474d57; stroke-width: 6; }
.cube > path { fill: #b5b7ba; }
.cube > .inner { fill: #a4a8b0; }
.cube text { font: 700 5px "Open Sans", sans-serif; fill: #4d535d; text-anchor: middle; }
.cube .dirs text { font-size: 9px; fill: #b9bcc1; }
.cube rect { fill: #a5a6b4; }
.cube .wcs { font-weight: 400; font-size: 6px; fill: #e4e5ec; }
.cube .wc { fill: none; stroke: #d0d1da; }
.scan path, .scan circle { fill: none; stroke: #4c4c4c; stroke-width: 2; }
.scan .thick { stroke: #1c1c1c; stroke-width: 4; }
.scan .thicker { stroke: #111; stroke-width: 6; }
.dots path { stroke: #111; stroke-width: 8; stroke-linecap: round; }
.snum text { font: 20px "Liberation Sans", sans-serif; text-anchor: middle; fill: #222; }
.snum .three { font-size: 26px; font-weight: 700; }
.navbar rect { fill: #dde0e0; fill-opacity: .6; stroke: #b9bdbe; }
.navbar path, .navbar circle { fill: none; stroke: #bfc4c4; }
.vlabel { position: absolute; left: 1px; top: 3px; color: #e6e8ea; white-space: nowrap; }
.vwin { position: absolute; right: 4px; top: 4px; display: flex; gap: 4px; }
.vwin svg { width: 6px; height: 6px; }
.cmd { position: absolute; left: 156px; right: 154px; bottom: 1px; height: 12px; display: flex; }
.cmdl { display: flex; align-items: center; width: 29px; gap: 4px; background: #2d3440; }
.cmdl b { width: 3px; height: 10px; margin-left: 2px; background: #555e6b; }
.cmdl svg { width: 7px; }
.cmdr { flex: 1; display: flex; align-items: center; gap: 2px; padding: 0 3px; background: #bfc0c1; }
.cmdr svg { width: 8px; height: 7px; }
.cmdr input { flex: 1; font: italic 6px "DejaVu Sans Mono", monospace; }
.cmdr input::placeholder { color: #555; opacity: 1; }
.cmdr .c { width: 4px; height: 2px; background: #444; }

footer { display: flex; justify-content: space-between; height: 14px; flex: none; }
.layouts { margin-top: 0; }
.layouts .on { margin: 0 6px 0 7px; padding: 0 5px; }
.status { display: flex; align-items: center; background: #2b323d; padding-left: 1px; }
.status button { width: 12px; height: 11px; justify-content: center; }
.status svg { width: 9px; height: 9px; }
.status .c { width: 4px; height: 2px; margin: 0 3px 0 2px; }
.status .t { width: 30px; }
.status .b { background: #4581bd; margin-left: 1px; }
.status .n { width: 11px; }
.status .m { margin: 0 2px; }
```
